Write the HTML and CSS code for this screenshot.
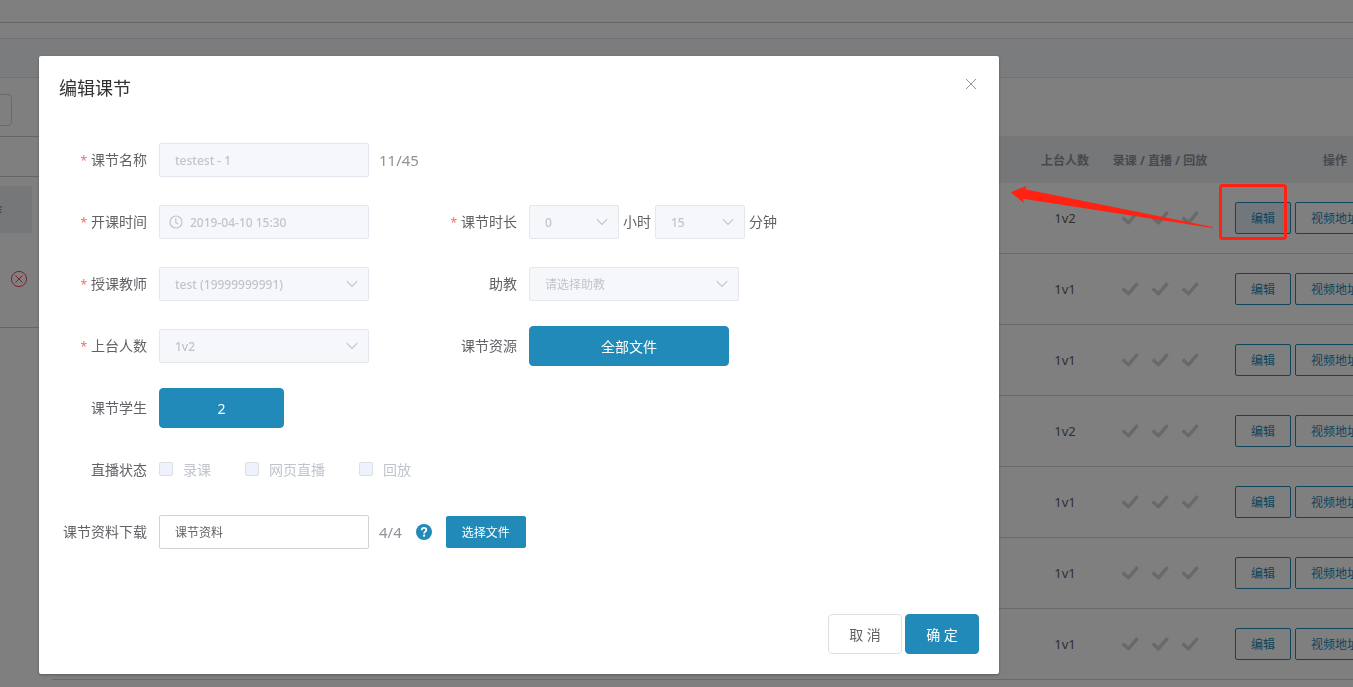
FILE: index.html
```html
<!DOCTYPE html>
<html lang="zh-CN">
<head>
<meta charset="utf-8">
<title>编辑课节</title>
<link rel="stylesheet" href="styles.css">
</head>
<body>
<svg class="sprite" aria-hidden="true">
  <symbol id="check" viewBox="0 0 18 14"><path d="M1.6 6.6l5.8 5.2L16.6 1.2" fill="none" stroke="currentColor" stroke-width="3.4" stroke-linejoin="round"/></symbol>
  <symbol id="chevron" viewBox="0 0 12 8"><path d="M.8 1.2L6 6.5l5.2-5.3" fill="none" stroke="currentColor" stroke-width="1.1"/></symbol>
</svg>

<div class="page">
  <header class="topbar"></header>
  <nav class="band"></nav>
  <div class="columns">
    <aside class="side">
      <div class="side-search"><input class="side-input" type="text" aria-label="搜索"></div>
      <div class="side-tabs"></div>
      <div class="side-head">操作</div>
      <div class="side-row">
        <svg width="18" height="18" viewBox="0 0 18 18" fill="none" stroke="currentColor"><circle cx="9" cy="9" r="7.6"/><path d="M5.5 5.5l7 7M12.5 5.5l-7 7"/></svg>
      </div>
    </aside>
    <main class="main">
      <table class="lessons">
        <colgroup><col><col class="col-count"><col class="col-state"><col class="col-ops"></colgroup>
        <thead><tr><th></th><th>上台人数</th><th>录课 / 直播 / 回放</th><th>操作</th></tr></thead>
        <tbody>
          <tr><td></td><td>1v2</td><td><div class="checks"><svg><use href="#check"/></svg><svg><use href="#check"/></svg><svg><use href="#check"/></svg></div></td><td><div class="ops"><button class="btn-line active">编辑</button><button class="btn-line">视频地址</button></div></td></tr>
          <tr><td></td><td>1v1</td><td><div class="checks"><svg><use href="#check"/></svg><svg><use href="#check"/></svg><svg><use href="#check"/></svg></div></td><td><div class="ops"><button class="btn-line">编辑</button><button class="btn-line">视频地址</button></div></td></tr>
          <tr><td></td><td>1v1</td><td><div class="checks"><svg><use href="#check"/></svg><svg><use href="#check"/></svg><svg><use href="#check"/></svg></div></td><td><div class="ops"><button class="btn-line">编辑</button><button class="btn-line">视频地址</button></div></td></tr>
          <tr><td></td><td>1v2</td><td><div class="checks"><svg><use href="#check"/></svg><svg><use href="#check"/></svg><svg><use href="#check"/></svg></div></td><td><div class="ops"><button class="btn-line">编辑</button><button class="btn-line">视频地址</button></div></td></tr>
          <tr><td></td><td>1v1</td><td><div class="checks"><svg><use href="#check"/></svg><svg><use href="#check"/></svg><svg><use href="#check"/></svg></div></td><td><div class="ops"><button class="btn-line">编辑</button><button class="btn-line">视频地址</button></div></td></tr>
          <tr><td></td><td>1v1</td><td><div class="checks"><svg><use href="#check"/></svg><svg><use href="#check"/></svg><svg><use href="#check"/></svg></div></td><td><div class="ops"><button class="btn-line">编辑</button><button class="btn-line">视频地址</button></div></td></tr>
          <tr><td></td><td>1v1</td><td><div class="checks"><svg><use href="#check"/></svg><svg><use href="#check"/></svg><svg><use href="#check"/></svg></div></td><td><div class="ops"><button class="btn-line">编辑</button><button class="btn-line">视频地址</button></div></td></tr>
        </tbody>
      </table>
    </main>
  </div>
</div>

<div class="overlay">
  <section class="dialog" role="dialog" aria-labelledby="dialog-title">
    <header class="dialog-head">
      <h1 class="dialog-title" id="dialog-title">编辑课节</h1>
      <button class="close" aria-label="关闭"><svg width="12" height="12" viewBox="0 0 12 12" fill="none" stroke="currentColor"><path d="M1 1l10 10M11 1L1 11"/></svg></button>
    </header>
    <form class="form">
      <div class="field wide">
        <label class="label required" for="name">课节名称</label>
        <input class="input" id="name" type="text" value="testest - 1" disabled>
        <span class="counter">11/45</span>
      </div>
      <div class="field">
        <label class="label required" for="start">开课时间</label>
        <div class="control">
          <svg class="clock" viewBox="0 0 14 14" fill="none" stroke="currentColor" stroke-width="1.2"><circle cx="7" cy="7" r="6"/><path d="M6.8 3.2v4.2l2.4 1.8"/></svg>
          <input class="input date" id="start" type="text" value="2019-04-10 15:30" disabled>
        </div>
      </div>
      <div class="field">
        <label class="label required" for="hours">课节时长</label>
        <div class="duration">
          <div class="control short"><select class="input" id="hours" disabled><option>0</option></select><svg class="arrow"><use href="#chevron"/></svg></div>
          <label class="unit" for="hours">小时</label>
          <div class="control short"><select class="input" id="minutes" disabled><option>15</option></select><svg class="arrow"><use href="#chevron"/></svg></div>
          <label class="unit" for="minutes">分钟</label>
        </div>
      </div>
      <div class="field">
        <label class="label required" for="teacher">授课教师</label>
        <div class="control"><select class="input" id="teacher" disabled><option>test (19999999991)</option></select><svg class="arrow"><use href="#chevron"/></svg></div>
      </div>
      <div class="field">
        <label class="label" for="assistant">助教</label>
        <div class="control"><select class="input placeholder" id="assistant" disabled><option>请选择助教</option></select><svg class="arrow"><use href="#chevron"/></svg></div>
      </div>
      <div class="field">
        <label class="label required" for="seats">上台人数</label>
        <div class="control"><select class="input" id="seats" disabled><option>1v2</option></select><svg class="arrow"><use href="#chevron"/></svg></div>
      </div>
      <div class="field">
        <label class="label" for="files">课节资源</label>
        <button class="btn primary files" id="files" type="button">全部文件</button>
      </div>
      <div class="field wide">
        <label class="label" for="students">课节学生</label>
        <button class="btn primary students" id="students" type="button">2</button>
      </div>
      <div class="field wide" role="group" aria-labelledby="live-label">
        <span class="label" id="live-label">直播状态</span>
        <div class="options">
          <label class="option"><input class="box" type="checkbox" disabled>录课</label>
          <label class="option"><input class="box" type="checkbox" disabled>网页直播</label>
          <label class="option"><input class="box" type="checkbox" disabled>回放</label>
        </div>
      </div>
      <div class="field wide">
        <label class="label" for="material">课节资料下载</label>
        <input class="input" id="material" type="text" value="课节资料">
        <span class="counter">4/4</span>
        <svg class="help" viewBox="0 0 16 16" role="img" aria-label="帮助"><circle cx="8" cy="8" r="8" fill="currentColor"/><path d="M5.7 6.2c0-1.5 1-2.3 2.3-2.3s2.3.8 2.3 2c0 1.8-2.2 1.7-2.2 3.5" fill="none" stroke="#fff" stroke-width="1.8"/><rect x="7.1" y="10.6" width="2" height="2" fill="#fff"/></svg>
        <button class="btn primary small" type="button">选择文件</button>
      </div>
    </form>
    <footer class="dialog-foot">
      <button class="btn">取 消</button>
      <button class="btn primary">确 定</button>
    </footer>
  </section>
</div>

<svg class="callout" width="280" height="60" viewBox="0 0 280 60" aria-hidden="true">
  <path d="M.7 11.3L17 4.7l-2 3.6L202.7 46v1L12.7 17.7 14 22z" fill="#ff2212"/>
  <rect x="210.5" y="4.5" width="65" height="53" rx="2" fill="none" stroke="#ff2212" stroke-width="3"/>
</svg>
</body>
</html>
```
FILE: styles.css
```css
* { box-sizing: border-box; }

body {
  margin: 0;
  height: 100vh;
  overflow: hidden;
  background: #fff;
  color: #606266;
  font-family: "Noto Sans", "Noto Sans CJK SC", sans-serif;
  font-size: 14px;
}

button, input, select { font-family: inherit; }

.sprite { display: none; }

/* Page behind the dialog */
.topbar { height: 23px; border-bottom: 1px solid #ccc; }

.band {
  height: 40px;
  margin-top: 15px;
  background: #f6f8fc;
  border-top: 1px solid #e2e3e6;
  border-bottom: 1px solid #e2e3e6;
}

.columns { display: flex; gap: 12px; }

.side { flex: none; width: 40px; overflow: hidden; }

.side-search { height: 59px; padding-top: 16px; border-bottom: 1px solid #ccc; }

.side-input {
  display: block;
  width: 16px;
  height: 32px;
  margin-left: -4px;
  border: 1px solid #d4d4d4;
  border-radius: 4px;
  background: #fff;
}

.side-tabs { height: 40px; border-bottom: 1px solid #ccc; }

.side-head {
  display: flex;
  align-items: center;
  justify-content: flex-end;
  width: 32px;
  height: 47px;
  margin-top: 9px;
  padding-right: 30px;
  overflow: hidden;
  background: #ebeef3;
  color: #909399;
  font-size: 12px;
  font-weight: 700;
  white-space: nowrap;
}

.side-row {
  display: flex;
  align-items: center;
  height: 95px;
  padding: 0 0 2px 10px;
  border-bottom: 1px solid #ccc;
  color: #f5465d;
}

.main { flex: 1; min-width: 0; padding-top: 58px; overflow: hidden; }

.lessons {
  width: calc(100% + 92px);
  table-layout: fixed;
  border-collapse: separate;
  border-spacing: 0;
  font-size: 13px;
  text-align: center;
}

.col-count { width: 60px; }
.col-state { width: 130px; }
.col-ops { width: 220px; }

.lessons th {
  height: 47px;
  padding: 0;
  background: #ebeef3;
  color: #909399;
  font-size: 12px;
  font-weight: 700;
  white-space: nowrap;
}

.lessons td { height: 71px; padding: 0; border-bottom: 1px solid #d2d2d2; }

.checks { display: flex; justify-content: center; gap: 12px; color: #d2d2d2; }
.checks svg { width: 18px; height: 14px; }

.ops { display: flex; gap: 4px; padding-left: 10px; }

.btn-line {
  height: 32px;
  padding: 0 15px;
  border: 1px solid #228ab9;
  border-radius: 2px;
  background: #fff;
  color: #228ab9;
  font-size: 12px;
}

.btn-line.active { background: #e4eff8; }

/* Dialog */
.overlay {
  position: fixed;
  inset: 0;
  padding: 56px 39px;
  background: rgba(0, 0, 0, .5);
}

.dialog {
  max-width: 960px;
  padding: 20px;
  border-radius: 2px;
  background: #fff;
  box-shadow: 0 1px 3px rgba(0, 0, 0, .3);
}

.dialog-head { display: flex; justify-content: space-between; }

.dialog-title {
  margin: 0;
  color: #303133;
  font-size: 18px;
  font-weight: 400;
  line-height: 24px;
}

.close {
  display: flex;
  align-items: center;
  justify-content: center;
  width: 16px;
  height: 16px;
  padding: 0;
  border: 0;
  background: none;
  color: #909399;
}

.form {
  display: grid;
  grid-template-columns: 370px 1fr;
  grid-auto-rows: 40px;
  row-gap: 22px;
  padding: 40px 0 62px;
}

.field { display: flex; align-items: center; }
.wide { grid-column: 1 / -1; }

.label, .unit, .option { padding-bottom: 2px; }
.label { width: 100px; padding-right: 12px; text-align: right; white-space: nowrap; }
.required::before { content: "*"; margin-right: 4px; color: #f56c6c; font-size: 12px; }

.control { position: relative; width: 210px; }
.control.short { width: 90px; }
.control .input { width: 100%; }

.input {
  display: block;
  width: 210px;
  height: 34px;
  padding: 0 15px;
  border: 1px solid #d0d2d6;
  border-radius: 2px;
  background: #fff;
  color: #606266;
  font-size: 12px;
  appearance: none;
}

.input:disabled {
  border-color: #e4e7ed;
  background: #f5f7fa;
  color: #c0c4cc;
  font-weight: 500;
  opacity: 1;
}

.input.placeholder { font-weight: 400; }
.input.date { padding-left: 30px; }

.clock {
  position: absolute;
  top: 10px;
  left: 10px;
  width: 14px;
  height: 14px;
  color: #c0c4cc;
}

.arrow {
  position: absolute;
  top: 13px;
  right: 11px;
  width: 12px;
  height: 8px;
  color: #c0c4cc;
}

.duration { display: flex; align-items: center; gap: 4px; }

.counter { margin-left: 10px; color: #909399; font-size: 15px; }

.options { display: flex; gap: 34px; color: #c0c4cc; }
.option { display: flex; align-items: center; gap: 10px; }

.box {
  width: 14px;
  height: 14px;
  margin: 0;
  border: 1px solid #dcdfe6;
  border-radius: 2px;
  background: #edf2fc;
  appearance: none;
}

.help { width: 16px; height: 16px; margin: 0 14px; color: #228ab9; }

.btn {
  min-width: 74px;
  height: 40px;
  padding: 0 20px;
  border: 1px solid #dcdfe6;
  border-radius: 4px;
  background: #fff;
  color: #606266;
  font-size: 14px;
}

.primary { border-color: #228ab9; background: #228ab9; color: #fff; }
.files { width: 200px; }
.students { width: 125px; }
.small { height: 32px; padding: 0 15px; border-radius: 2px; font-size: 12px; }

.dialog-foot { display: flex; justify-content: flex-end; gap: 3px; }

/* Red marker drawn over the page */
.callout { position: absolute; top: 181px; left: 1010px; pointer-events: none; }
```
